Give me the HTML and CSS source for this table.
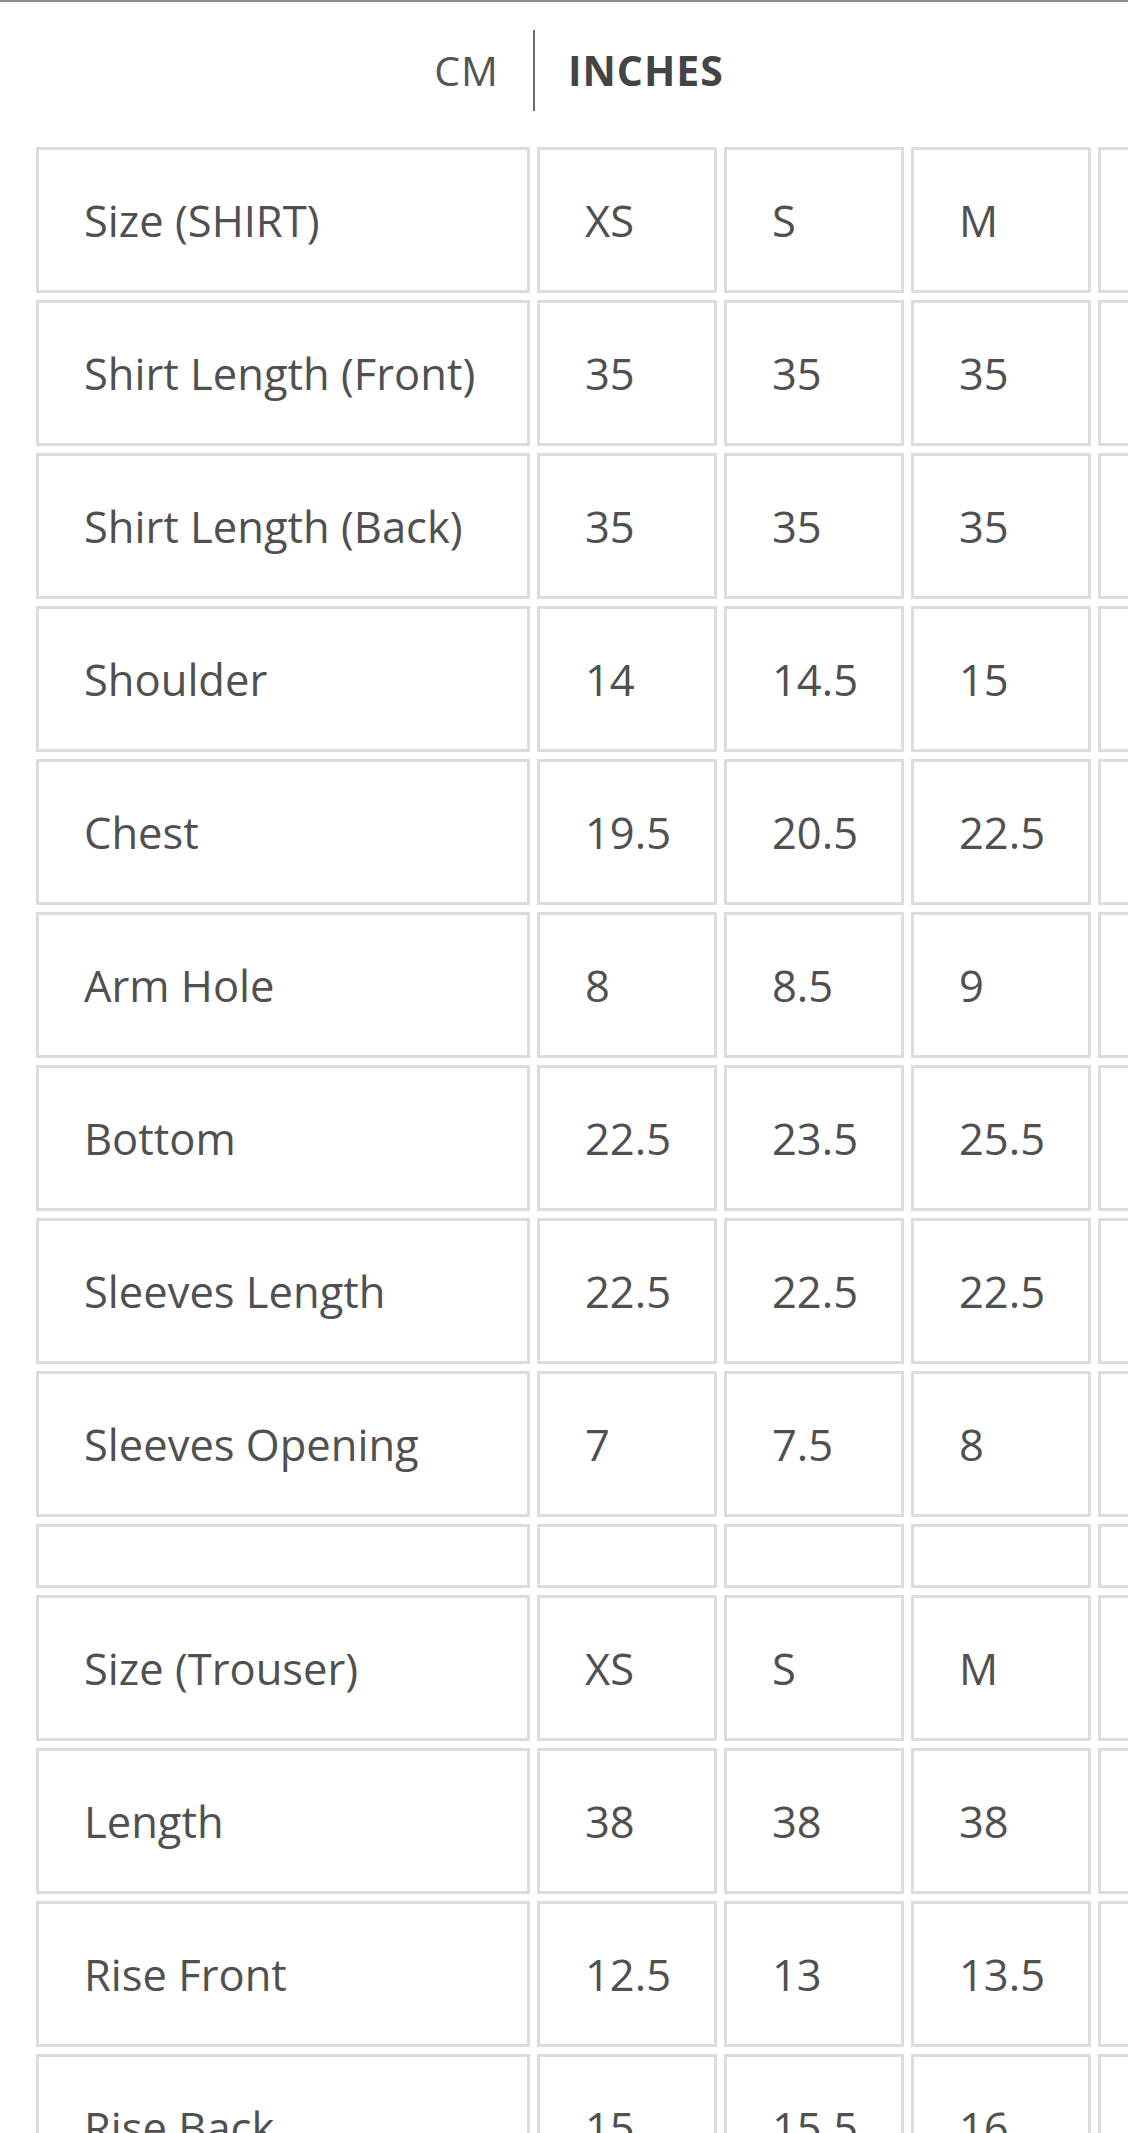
FILE: index.html
```html
<!DOCTYPE html>
<html lang="en">
<head>
<meta charset="utf-8">
<title>Size Chart</title>
<link rel="stylesheet" href="styles.css">
</head>
<body>
<div class="page">
  <div class="unit-toggle">
    <span class="unit unit-cm">CM</span>
    <span class="unit unit-in">INCHES</span>
  </div>
  <div class="table-wrap">
    <table class="size-table">
      <tbody>
        <tr><td class="label">Size (SHIRT)</td><td>XS</td><td>S</td><td>M</td><td></td></tr>
        <tr><td class="label">Shirt Length (Front)</td><td>35</td><td>35</td><td>35</td><td></td></tr>
        <tr><td class="label">Shirt Length (Back)</td><td>35</td><td>35</td><td>35</td><td></td></tr>
        <tr><td class="label">Shoulder</td><td>14</td><td>14.5</td><td>15</td><td></td></tr>
        <tr><td class="label">Chest</td><td>19.5</td><td>20.5</td><td>22.5</td><td></td></tr>
        <tr><td class="label">Arm Hole</td><td>8</td><td>8.5</td><td>9</td><td></td></tr>
        <tr><td class="label">Bottom</td><td>22.5</td><td>23.5</td><td>25.5</td><td></td></tr>
        <tr><td class="label">Sleeves Length</td><td>22.5</td><td>22.5</td><td>22.5</td><td></td></tr>
        <tr><td class="label">Sleeves Opening</td><td>7</td><td>7.5</td><td>8</td><td></td></tr>
        <tr class="spacer"><td></td><td></td><td></td><td></td><td></td></tr>
        <tr><td class="label">Size (Trouser)</td><td>XS</td><td>S</td><td>M</td><td></td></tr>
        <tr><td class="label">Length</td><td>38</td><td>38</td><td>38</td><td></td></tr>
        <tr><td class="label">Rise Front</td><td>12.5</td><td>13</td><td>13.5</td><td></td></tr>
        <tr><td class="label">Rise Back</td><td>15</td><td>15.5</td><td>16</td><td></td></tr>
      </tbody>
    </table>
  </div>
</div>
</body>
</html>
```
FILE: styles.css
```css
html, body {
  margin: 0;
  padding: 0;
  background: #ffffff;
  overflow: hidden;
}

body {
  font-family: "Open Sans", "Noto Sans", sans-serif;
  color: #505050;
}

.page {
  border-top: 2px solid #8c8c8c;
}

.unit-toggle {
  display: flex;
  justify-content: center;
  align-items: center;
  padding-left: 30px;
  margin-top: 28px;
  height: 81px;
}

.unit {
  font-size: 41px;
  line-height: 1;
}

.unit-cm {
  color: #555555;
  letter-spacing: 1px;
  padding-right: 34px;
  border-right: 2px solid #6e6e6e;
  height: 81px;
  display: flex;
  align-items: center;
}

.unit-in {
  color: #444444;
  font-weight: 700;
  letter-spacing: 1px;
  padding-left: 33px;
}

.table-wrap {
  margin-top: 29px;
  padding-left: 29px;
  overflow: hidden;
}

.size-table {
  border-collapse: separate;
  border-spacing: 7px;
  margin: 0 0 0 -7px;
  padding-left: 7px;
}

.size-table td {
  box-sizing: border-box;
  width: 180px;
  min-width: 180px;
  height: 146px;
  border: 3px solid #dcdcdc;
  padding: 0 20px 0 45px;
  font-size: 43.5px;
  line-height: normal;
  vertical-align: middle;
  white-space: nowrap;
  color: #505050;
}

.size-table td.label {
  width: 494px;
  min-width: 494px;
}

.size-table tr.spacer td {
  height: 64px;
}
```
